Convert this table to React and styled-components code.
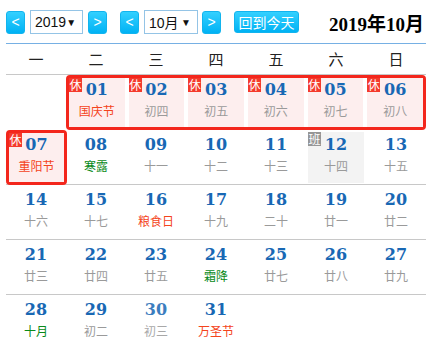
import React from "react";
import styled, { createGlobalStyle } from "styled-components";

const GlobalStyle = createGlobalStyle`
  body {
    margin: 0;
    background: #fff;
    font-family: "Liberation Sans", "Noto Sans CJK SC", sans-serif;
  }
`;

const Page = styled.div`
  width: 420px;
  padding: 0 6px;
`;

const Toolbar = styled.div`
  display: flex;
  align-items: center;
  height: 24px;
  padding: 10px 0 9px;
  border-bottom: 1px solid #76b0e4;
`;

const ArrowBtn = styled.div`
  width: 19px;
  height: 23px;
  box-sizing: border-box;
  border-radius: 3px;
  background: linear-gradient(#34d0ff, #00b2f4);
  border: 1px solid #12b4ee;
  color: #fff;
  font-size: 14px;
  line-height: 20px;
  text-align: center;
  margin-left: ${(p) => p.$gap || 0}px;
`;

const FakeSelect = styled.div`
  display: flex;
  align-items: center;
  justify-content: space-between;
  box-sizing: border-box;
  width: ${(p) => p.$w}px;
  height: 24px;
  padding: 0 6px 0 4px;
  margin-left: 5px;
  border: 1px solid #94c4e6;
  background: #fff;
  color: #111;
  font-size: 14px;
  span:last-child {
    font-size: 10px;
  }
`;

const TodayBtn = styled.div`
  margin-left: 13px;
  width: 65px;
  height: 22px;
  box-sizing: border-box;
  border-radius: 3px;
  background: linear-gradient(#34d0ff, #00b2f4);
  border: 1px solid #12b4ee;
  color: #fff;
  font-size: 14px;
  line-height: 20px;
  text-align: center;
  font-family: "Noto Sans CJK SC", sans-serif;
`;

const Title = styled.div`
  margin-left: auto;
  margin-right: 2px;
  font-family: "Liberation Serif", "Noto Sans CJK SC", serif;
  font-weight: bold;
  font-size: 19px;
  color: #000;
`;

const WeekHead = styled.div`
  display: grid;
  grid-template-columns: repeat(7, 60px);
  height: 31px;
  box-sizing: border-box;
  border-bottom: 1px solid #c8c8c8;
  div {
    text-align: center;
    line-height: 30px;
    font-size: 15px;
    color: #222;
    font-family: "Noto Sans CJK SC", sans-serif;
  }
`;

const Week = styled.div`
  display: grid;
  grid-template-columns: repeat(7, 60px);
  height: 55px;
  box-sizing: border-box;
  border-bottom: ${(p) => (p.$line ? "1px solid #c8c8c8" : "none")};
`;

const HolidayGroup = styled.div`
  grid-column: ${(p) => p.$cols};
  display: grid;
  grid-template-columns: repeat(${(p) => p.$n}, 1fr);
  gap: 4px;
  height: 55px;
  box-sizing: border-box;
  border: 3px solid #f3261c;
  border-radius: 4px;
  margin-right: ${(p) => p.$mr || 0}px;
  position: relative;
  z-index: 1;
`;

const Cell = styled.div`
  position: relative;
  margin: ${(p) => (p.$inGroup ? "0" : "2px")};
  padding-top: ${(p) => (p.$inGroup ? "2px" : "3px")};
  text-align: center;
  background: ${(p) => (p.$off ? "#fdeeee" : p.$work ? "#f3f3f3" : "transparent")};
  opacity: ${(p) => (p.$fade ? 0.85 : 1)};
`;

const Num = styled.div`
  font-family: "DejaVu Serif", serif;
  font-weight: bold;
  font-size: 16px;
  line-height: 20px;
  color: #1868b4;
`;

const Lunar = styled.div`
  margin-top: 3px;
  font-family: "Noto Sans CJK SC", sans-serif;
  font-size: 12px;
  line-height: 16px;
  color: ${(p) =>
    p.$kind === "fest" ? "#f4441c" : p.$kind === "term" ? "#0a8a1a" : "#9a9a9a"};
`;

const Badge = styled.div`
  position: absolute;
  left: 0;
  top: 0;
  width: 13px;
  height: 14px;
  background: ${(p) => (p.$work ? "#969696" : "#f43a2c")};
  color: #fff;
  font-family: "Noto Sans CJK SC", sans-serif;
  font-size: 12px;
  line-height: 14px;
  text-align: center;
`;

const Day = ({ d, inGroup }) => (
  <Cell $inGroup={inGroup} $off={d.off} $work={d.work} $fade={d.fade}>
    {d.off && <Badge>休</Badge>}
    {d.work && <Badge $work>班</Badge>}
    <Num>{d.n}</Num>
    <Lunar $kind={d.kind}>{d.l}</Lunar>
  </Cell>
);

const holiday1 = [
  { n: "01", l: "国庆节", kind: "fest", off: true },
  { n: "02", l: "初四", off: true },
  { n: "03", l: "初五", off: true },
  { n: "04", l: "初六", off: true },
  { n: "05", l: "初七", off: true },
  { n: "06", l: "初八", off: true },
];

const week2 = [
  { n: "08", l: "寒露", kind: "term" },
  { n: "09", l: "十一" },
  { n: "10", l: "十二" },
  { n: "11", l: "十三" },
  { n: "12", l: "十四", work: true },
  { n: "13", l: "十五" },
];

const rest = [
  [
    { n: "14", l: "十六" },
    { n: "15", l: "十七" },
    { n: "16", l: "粮食日", kind: "fest" },
    { n: "17", l: "十九" },
    { n: "18", l: "二十" },
    { n: "19", l: "廿一" },
    { n: "20", l: "廿二" },
  ],
  [
    { n: "21", l: "廿三" },
    { n: "22", l: "廿四" },
    { n: "23", l: "廿五" },
    { n: "24", l: "霜降", kind: "term" },
    { n: "25", l: "廿七" },
    { n: "26", l: "廿八" },
    { n: "27", l: "廿九" },
  ],
  [
    { n: "28", l: "十月", kind: "term" },
    { n: "29", l: "初二" },
    { n: "30", l: "初三", fade: true },
    { n: "31", l: "万圣节", kind: "fest" },
  ],
];

export default function App() {
  return (
    <Page>
      <GlobalStyle />
      <Toolbar>
        <ArrowBtn>&lt;</ArrowBtn>
        <FakeSelect $w={53}>
          <span>2019</span>
          <span>▼</span>
        </FakeSelect>
        <ArrowBtn $gap={5}>&gt;</ArrowBtn>
        <ArrowBtn $gap={13}>&lt;</ArrowBtn>
        <FakeSelect $w={54}>
          <span>10月</span>
          <span>▼</span>
        </FakeSelect>
        <ArrowBtn $gap={4}>&gt;</ArrowBtn>
        <TodayBtn>回到今天</TodayBtn>
        <Title>2019年10月</Title>
      </Toolbar>
      <WeekHead>
        {["一", "二", "三", "四", "五", "六", "日"].map((w) => (
          <div key={w}>{w}</div>
        ))}
      </WeekHead>
      <Week>
        <div />
        <HolidayGroup $cols="2 / 8" $n={6}>
          {holiday1.map((d) => (
            <Day key={d.n} d={d} inGroup />
          ))}
        </HolidayGroup>
      </Week>
      <Week $line>
        <HolidayGroup $cols="1 / 2" $n={1} $mr={-1}>
          <Day d={{ n: "07", l: "重阳节", kind: "fest", off: true }} inGroup />
        </HolidayGroup>
        {week2.map((d) => (
          <Day key={d.n} d={d} />
        ))}
      </Week>
      {rest.map((w, i) => (
        <Week key={i} $line={i < 2}>
          {w.map((d) => (
            <Day key={d.n} d={d} />
          ))}
        </Week>
      ))}
    </Page>
  );
}
